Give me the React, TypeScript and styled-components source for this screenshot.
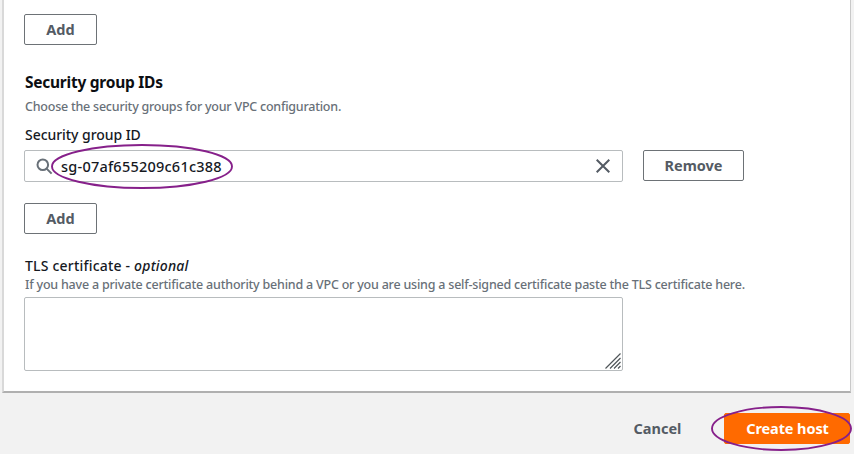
import React from "react";
import styled, { createGlobalStyle } from "styled-components";

const GlobalStyle = createGlobalStyle`
  *, *::before, *::after { box-sizing: border-box; }
  body { margin: 0; background: #f2f2f2; overflow: hidden; }
  button, input, textarea { font-family: inherit; margin: 0; }
`;

const Page = styled.main`
  width: 854px;
  height: 454px;
  padding: 0 3px 0 2px;
  overflow: hidden;
  background: #f2f2f2;
  color: #16191f;
  font-family: "Noto Sans", sans-serif;
`;

const Card = styled.section`
  height: 393px;
  padding: 14px 0 0 20px;
  background: #fff;
  border: solid;
  border-width: 0 1px 2px 2px;
  border-color: #c9c9c9 #c9c9c9 #b0b0b0 #d9d9d9;
`;

const Button = styled.button<{ $width: number }>`
  display: flex;
  align-items: center;
  justify-content: center;
  flex: none;
  width: ${(p) => p.$width}px;
  height: 31px;
  padding: 0 0 2px;
  border: 1px solid #6d7276;
  border-radius: 2px;
  background: #fff;
  color: #545b64;
  font-size: 14.5px;
  font-weight: 700;
  line-height: 20px;
  white-space: nowrap;
`;

const PrimaryButton = styled(Button)`
  padding-left: 1px;
  border-color: #ff6a00;
  background: #ff6a00;
  color: #fff;
  letter-spacing: -0.1px;
`;

const LinkButton = styled(Button)`
  padding-left: 1px;
  border-color: transparent;
  background: transparent;
`;

const Heading = styled.h2`
  margin: 26px 0 5px;
  padding-left: 1px;
  color: #0c0e12;
  font-size: 15.5px;
  font-weight: 700;
  line-height: 22px;
  letter-spacing: -0.25px;
`;

const Hint = styled.p<{ $spacing: number }>`
  margin: 0;
  padding-left: 1px;
  color: #687078;
  font-size: 12.5px;
  font-weight: 500;
  line-height: 18px;
  letter-spacing: ${(p) => p.$spacing}px;
  white-space: nowrap;
`;

const Label = styled.label<{ $spacing: number }>`
  display: block;
  padding-left: 1px;
  font-size: 14px;
  font-weight: 500;
  line-height: 20px;
  letter-spacing: ${(p) => p.$spacing}px;
`;

const GroupBlock = styled.div`
  margin: 9px 0 21px;
`;

const FieldRow = styled.div`
  display: flex;
  gap: 20px;
  margin-top: 5px;
`;

const SearchBox = styled.div`
  position: relative;
  display: flex;
  align-items: center;
  width: 599px;
  height: 32px;
  padding: 0 12px 0 11px;
  border: 1px solid #b8bcbe;
  border-radius: 2px;
`;

const SearchInput = styled.input`
  flex: 1;
  min-width: 0;
  padding: 0;
  margin-left: 8px;
  border: 0;
  outline: 0;
  background: transparent;
  color: #16191f;
  font-size: 14.5px;
  font-weight: 500;
  line-height: 20px;
  letter-spacing: 0.23px;
`;

const TlsBlock = styled.div`
  margin-top: 22px;
`;

const TextBox = styled.div`
  display: flex;
  align-items: flex-end;
  justify-content: flex-end;
  width: 599px;
  height: 74px;
  margin-top: 3px;
  padding: 0 1px 1px 0;
  border: 1px solid #b8bcbe;
  border-radius: 2px;
`;

const TextArea = styled.textarea`
  flex: 1;
  align-self: stretch;
  border: 0;
  outline: 0;
  resize: none;
  background: transparent;
`;

const Footer = styled.footer`
  display: flex;
  justify-content: flex-end;
  gap: 25px;
  padding: 20px 1px 0 0;
`;

const Highlighted = styled.div`
  position: relative;
`;

const Ring = styled.svg<{ $left: number; $top: number }>`
  position: absolute;
  left: ${(p) => p.$left}px;
  top: ${(p) => p.$top}px;
  overflow: visible;
  pointer-events: none;
`;

function Ellipse(props: { left: number; top: number; width: number; height: number }) {
  const { left, top, width, height } = props;
  return (
    <Ring $left={left} $top={top} width={width} height={height}>
      <ellipse
        cx={width / 2}
        cy={height / 2}
        rx={width / 2 - 1}
        ry={height / 2 - 1}
        fill="none"
        stroke="#86208a"
        strokeWidth="1.9"
      />
    </Ring>
  );
}

export default function App() {
  return (
    <>
      <GlobalStyle />
      <Page>
        <Card>
          <Button $width={73}>Add</Button>
          <Heading>Security group IDs</Heading>
          <Hint $spacing={-0.23}>Choose the security groups for your VPC configuration.</Hint>
          <GroupBlock>
            <Label htmlFor="group" $spacing={-0.05}>
              Security group ID
            </Label>
            <FieldRow>
              <SearchBox>
                <svg width="17" height="17" viewBox="0 0 17 17" fill="none" stroke="#687078" strokeWidth="2">
                  <circle cx="6.8" cy="6.8" r="5.3" />
                  <path d="M10.6 10.6 15.6 15.6" />
                </svg>
                <SearchInput id="group" defaultValue="sg-07af655209c61c388" />
                <svg width="14" height="14" viewBox="0 0 14 14" fill="none" stroke="#545b64" strokeWidth="2">
                  <path d="M.7.7 13.3 13.3M13.3.7.7 13.3" />
                </svg>
                <Ellipse left={25.5} top={-7} width={182} height={45} />
              </SearchBox>
              <Button $width={101}>Remove</Button>
            </FieldRow>
          </GroupBlock>
          <Button $width={73}>Add</Button>
          <TlsBlock>
            <Label htmlFor="tls" $spacing={0.2}>
              TLS certificate - <em>optional</em>
            </Label>
            <Hint $spacing={-0.212}>
              If you have a private certificate authority behind a VPC or you are using a self-signed certificate paste
              the TLS certificate here.
            </Hint>
            <TextBox>
              <TextArea id="tls" />
              <svg width="16" height="16" viewBox="0 0 16 16" stroke="#50565a" strokeWidth="1.2">
                <path d="M.5 15.5 15.5.5M5 15.5 15.5 5M9 15.5 15.5 9M13 15.5 15.5 13" />
              </svg>
            </TextBox>
          </TlsBlock>
        </Card>
        <Footer>
          <LinkButton $width={84}>Cancel</LinkButton>
          <Highlighted>
            <PrimaryButton $width={126}>Create host</PrimaryButton>
            <Ellipse left={-13} top={-7} width={141} height={45} />
          </Highlighted>
        </Footer>
      </Page>
    </>
  );
}
